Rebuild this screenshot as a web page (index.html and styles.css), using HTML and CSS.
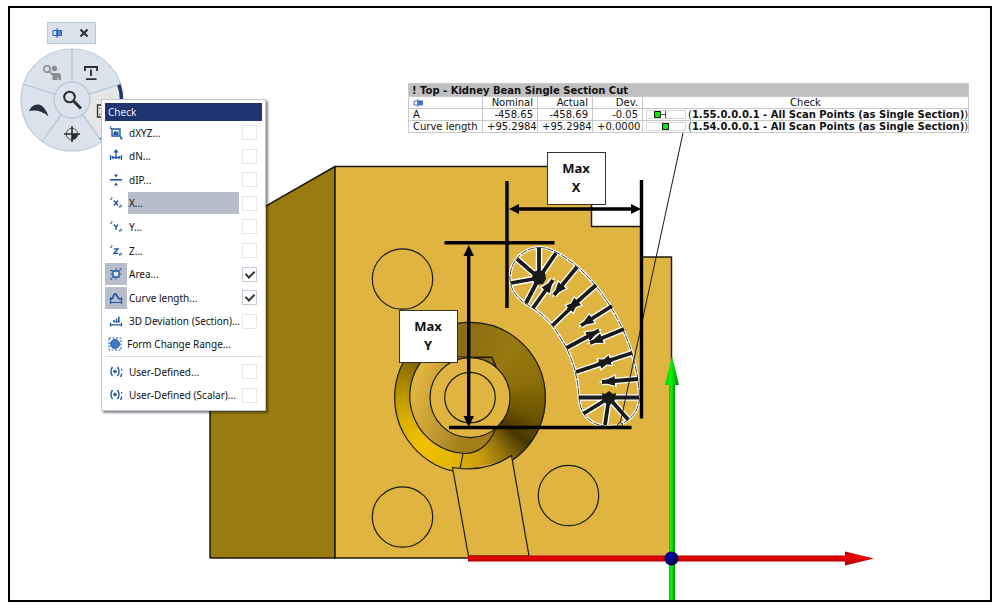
FILE: index.html
```html
<!DOCTYPE html>
<html lang="en">
<head>
<meta charset="utf-8">
<title>Check – Kidney Bean Single Section Cut</title>
<link rel="stylesheet" href="styles.css">
</head>
<body>
<main class="viewport">
  <svg class="scene" width="999" height="609" viewBox="0 0 999 609" aria-hidden="true">
    <defs>
      <linearGradient id="pocket" x1="0" y1="0" x2="1" y2="0.35">
        <stop offset="0.15" stop-color="#e0b440"/><stop offset="0.6" stop-color="#b8922c"/><stop offset="0.85" stop-color="#a37d18"/>
      </linearGradient>
      <linearGradient id="red" x1="0" y1="0" x2="0" y2="1">
        <stop offset="0" stop-color="#b00000"/><stop offset="0.4" stop-color="#f00404"/><stop offset="1" stop-color="#a80000"/>
      </linearGradient>
      <linearGradient id="green" x1="0" y1="0" x2="1" y2="0">
        <stop offset="0" stop-color="#00d000"/><stop offset="0.4" stop-color="#0cf20c"/><stop offset="1" stop-color="#008c00"/>
      </linearGradient>
      <radialGradient id="ball" cx="0.4" cy="0.35">
        <stop offset="0" stop-color="#0808b8"/><stop offset="1" stop-color="#000058"/>
      </radialGradient>
      <marker id="tip" markerUnits="userSpaceOnUse" markerWidth="20" markerHeight="20" refX="13" refY="8" orient="auto">
        <path d="M0 3 13 8 0 13Z" fill="#1a1a1a"/>
      </marker>
      <marker id="tipHalo" markerUnits="userSpaceOnUse" markerWidth="24" markerHeight="24" refX="15" refY="10" orient="auto">
        <path d="M2 5 15 10 2 15Z" fill="#fff" stroke="#fff" stroke-width="2.4"/>
      </marker>
      <g id="spokes">
        <path d="M539 278V248M539 278 556 253M539 278 517 259M539 278 511 283M539 278 526 303"/>
        <path d="M579 397.500H639M609 398 583.500 413.500M609 398 605 425M609 398 628 419.500"/>
      </g>
      <g id="vectors">
        <path d="M533 308 553 280"/><path d="M577 267 554 295"/>
        <path d="M596 285 568 310"/><path d="M552.500 325.500 579 300"/>
        <path d="M612 306 581 325.500"/><path d="M624 329 590 343"/>
        <path d="M566.500 348 599 330.500"/><path d="M632 353 598 364"/>
        <path d="M576 372 612 360"/><path d="M638 379 602 382"/>
      </g>
    </defs>

    <!-- solid body -->
    <g stroke="#1d1a0c" stroke-width="1.5" stroke-linejoin="round">
      <path d="M335 166.500 210 238V558H335Z" fill="#9a7b11"/>
      <path d="M335 166.500H591.500V226.500H641V257H671.500V558H335Z" fill="#e0b440"/>
    </g>
    <g fill="none" stroke="#1d1a0c" stroke-width="1.200">
      <circle cx="402.500" cy="279" r="30.200"/><circle cx="402.500" cy="517" r="30.200"/><circle cx="568.500" cy="495.500" r="30.200"/>
    </g>

    <!-- countersunk bore -->
    <foreignObject x="394" y="322" width="152" height="152"><div xmlns="http://www.w3.org/1999/xhtml" class="bore"></div></foreignObject>
    <g stroke="#1d1a0c" stroke-width="1.200">
      <circle cx="470" cy="397.600" r="75.300" fill="none"/>
      <path d="M425 357H492L496 367 470 397 495 430Q485 453 465 453.500A57.500 57.500 0 0 1 425 357Z" fill="url(#pocket)"/>
      <path d="M463 453.500 460 469" fill="none"/>
      <path d="M470 357.500H492L496 367Q485 358 470 357.500Z" fill="#8b6d0c"/>
      <circle cx="470" cy="397.600" r="40" fill="#e0b440"/><circle cx="470" cy="397.600" r="25.300" fill="none"/>
      <path d="M453 472 452 467.500Q486 473 512 455.500L513 459" fill="#e0b440" stroke="none"/>
      <path d="M468.500 556 452.500 467.500Q486 473 511.500 455.500L529 556Z" fill="#e0b440"/>
    </g>

    <!-- kidney bean section -->
    <g id="bean" fill="none">
      <g stroke="#fff" stroke-width="6.500"><use href="#spokes"/><use href="#vectors" class="halo"/></g>
      <path id="outline" stroke="#fff" stroke-width="3" d="M539 247.500C548 247 562 254 577 266.500C601 287 622 321 632 353C637 371 639 382 639.300 397.500C639.500 414 625 426.500 609 426.500C592 426.500 580 415 579 398C578 378 573 358 563 342C555 328 547 317 533 308C518 300 510 291 510 278C510 261 523 248 539 247.500Z"/>
      <path stroke="#2d2a20" stroke-width="0.900" stroke-dasharray="7 1" d="M539 247.500C548 247 562 254 577 266.500C601 287 622 321 632 353C637 371 639 382 639.300 397.500C639.500 414 625 426.500 609 426.500C592 426.500 580 415 579 398C578 378 573 358 563 342C555 328 547 317 533 308C518 300 510 291 510 278C510 261 523 248 539 247.500Z"/>
      <g stroke="#1a1a1a" stroke-width="3.800"><use href="#spokes"/><use href="#vectors" class="solid"/></g>
      <path fill="#1a1a1a" d="M533 272 539 270 545 272 546 279 543 284 536 285 532 279ZM602 393 605 394 609 391 613 394 616 393 615 400 609 406 603 401Z"/>
    </g>
    <path d="M683 133 620 424" stroke="#1a1a1a" fill="none"/>
    <circle cx="620" cy="425" r="2.500" fill="#e0b440" stroke="#222" stroke-width="0.800"/>

    <!-- dimension lines -->
    <g stroke="#000" stroke-width="3.400" fill="none">
      <path d="M507 181V308M641.500 180V418.500M444.500 242.700H554.500M449 427.500H631.500"/>
      <path d="M517 209H633M468.700 254V419"/>
    </g>
    <path d="M509 209 519 204V214ZM641 209 631 204V214ZM468.700 245 463.500 256H474ZM468.700 427 463.500 416H474Z"/>

    <!-- axes -->
    <path d="M669 384H675V601H669Z" fill="url(#green)"/><path d="M672 356 679 385H665Z" fill="url(#green)"/>
    <path d="M468 555.500H845V561.500H468Z" fill="url(#red)"/><path d="M874 558.500 845 565.500V551.500Z" fill="url(#red)"/>
    <circle cx="671.500" cy="558.500" r="7" fill="url(#ball)"/>
  </svg>

  <div class="dimension dimension-x">Max<br>X</div>
  <div class="dimension dimension-y">Max<br>Y</div>

  <table class="report">
    <colgroup><col class="c-name"><col class="c-num"><col class="c-num"><col class="c-dev"><col></colgroup>
    <thead>
      <tr class="title"><th colspan="5">! Top - Kidney Bean Single Section Cut</th></tr>
      <tr class="heads">
        <th><svg class="pin" width="11" height="8" viewBox="0 0 11 8"><path d="M1 2H5V6H1ZM5 0V8" fill="none" stroke="#3f78c0"/><path d="M5 1.500H10V6.500H5Z" fill="#3f78c0"/></svg></th>
        <th>Nominal</th><th>Actual</th><th>Dev.</th><th class="center">Check</th>
      </tr>
    </thead>
    <tbody>
      <tr><td>A</td><td>-458.65</td><td>-458.69</td><td>-0.05</td>
        <td><div class="verdict"><svg width="40" height="9" viewBox="0 0 40 9"><path d="M.5.5H39.500V8.500H.5Z" fill="#fff" stroke="#d4d4d4"/><path d="M15 4.500H19.500M19.500 1V8" stroke="#555"/><path d="M8.500 1.500H14.500V7.500H8.500Z" fill="#0e0" stroke="#111"/></svg><span>(<b>1.55.0.0.0.1 - All Scan Points (as Single Section)</b>)</span></div></td></tr>
      <tr><td>Curve length</td><td>+95.2984</td><td>+95.2984</td><td>+0.0000</td>
        <td><div class="verdict"><svg width="40" height="9" viewBox="0 0 40 9"><path d="M.5.5H39.500V8.500H.5Z" fill="#fff" stroke="#d4d4d4"/><path d="M16.500 1.500H22.500V7.500H16.500Z" fill="#0e0" stroke="#111"/></svg><span>(<b>1.54.0.0.0.1 - All Scan Points (as Single Section)</b>)</span></div></td></tr>
    </tbody>
  </table>

  <div class="pinbar">
    <button type="button" aria-label="Pin"><svg width="11" height="10" viewBox="0 0 11 10"><path d="M1 2.500H5V7.500H1ZM5 0V10" fill="none" stroke="#1d5cb3"/><path d="M5.500 2.500H9.500V7.500H5.500Z" fill="#5b92dc" stroke="#1d5cb3"/></svg></button>
    <button type="button" aria-label="Close"><svg width="10" height="10" viewBox="0 0 10 10"><path d="M1.500 1.500 8.500 8.500M8.500 1.500 1.500 8.500" stroke="#2b2b2b" stroke-width="2"/></svg></button>
  </div>

  <nav class="wheel" aria-label="Tools">
    <svg class="wheel-face" width="104" height="104" viewBox="0 0 104 104">
      <circle cx="52" cy="52" r="51" fill="#dce2ec"/>
      <path d="M52 52 100.500 36.200A51 51 0 0 1 82 93.300Z" fill="#e6e6e6"/>
      <path d="M52 52V1M52 52 100.500 36.200M52 52 82 93.300M52 52 22 93.300M52 52 3.500 36.200" stroke="#bcc8d9" stroke-width="1.400"/>
      <circle cx="52" cy="52" r="51" fill="none" stroke="#bcc8d9" stroke-width="1.200"/>
      <path d="M99 36.700A49.500 49.500 0 0 1 81 92" fill="none" stroke="#1e3570" stroke-width="3.500"/>
      <circle cx="52" cy="52" r="18" fill="#dce2ec" stroke="#bcc8d9" stroke-width="1.400"/>
    </svg>
    <button type="button" class="tool t-inspect" aria-label="Inspect"><svg width="20" height="20" viewBox="0 0 20 20" fill="none" stroke="#2d2d2d"><circle cx="7.500" cy="7" r="5.300" stroke-width="2"/><path d="M11.500 11 19 18.500" stroke-width="3"/></svg></button>
    <button type="button" class="tool t-user" aria-label="Find object"><svg width="20" height="20" viewBox="0 0 20 20"><circle cx="5" cy="6" r="3.200" fill="none" stroke="#969696" stroke-width="1.800"/><path d="M7.500 8.500 11.500 12.500" stroke="#969696" stroke-width="2.200"/><circle cx="12.500" cy="5.500" r="2.700" fill="#8c8c8c"/><path d="M10 10H16Q19 10 19 13V17H16.500V14H15.500V17H10.500V13Z" fill="#8c8c8c"/></svg></button>
    <button type="button" class="tool t-text" aria-label="Dimension"><svg width="20" height="20" viewBox="0 0 20 20" fill="none" stroke="#2d2d2d" stroke-width="1.800"><path d="M3.900 8V4H16.100V8M10 6.500V13M5 16.200H15.500"/><path d="M3 4H17" stroke-width="2"/></svg></button>
    <button type="button" class="tool t-check" aria-label="Check"><svg width="20" height="20" viewBox="0 0 20 20" fill="none" stroke="#333"><path d="M10 4H6.500V16H10" stroke-width="1.300"/><path d="M8.500 7V8M8.500 13V14"/></svg></button>
    <button type="button" class="tool t-align" aria-label="Align"><svg width="20" height="20" viewBox="0 0 20 20"><path d="M10 10H16A6 6 0 0 1 10 16Z" fill="#2b2b2b"/><circle cx="10" cy="10" r="5.700" fill="none" stroke="#555"/><path d="M10 2V18M2 10H18" stroke="#2b2b2b" stroke-width="1.600"/></svg></button>
    <button type="button" class="tool t-surface" aria-label="Surface"><svg width="20" height="20" viewBox="0 0 20 20"><path d="M0 11Q3 3.500 10 4.500 16 6 19.500 16.500 11 9 0 11Z" fill="#29303c"/></svg></button>
  </nav>

  <section class="menu" aria-label="Check">
    <h1>Check</h1>
    <div class="rows rows-main">
      <div class="row"><span class="ic"><svg width="14" height="14" viewBox="0 0 14 14"><path d="M3 3H11V10H3Z" fill="none" stroke="#1c56a8" stroke-width="1.400"/><path d="M4.500 9V6L6.500 5 8 6.500 9.500 4V9ZM1 0 3 1 1 2ZM11 11 14 12 12 14Z" fill="#1c56a8"/><path d="M1 2.500H3M12 10V13" stroke="#1c56a8"/></svg></span><label for="k1">dXYZ...</label><input type="checkbox" id="k1"></div>
      <div class="row"><span class="ic"><svg width="14" height="14" viewBox="0 0 14 14"><path d="M7 2V10M3 8.500H11M1.500 6V11M12.500 6V11" fill="none" stroke="#1c56a8" stroke-width="1.300"/><path d="M7 0 9.500 3.500H4.500ZM2 8.500 4.500 6.500V10.500ZM12 8.500 9.500 6.500V10.500Z" fill="#1c56a8"/></svg></span><label for="k2">dN...</label><input type="checkbox" id="k2"></div>
      <div class="row"><span class="ic"><svg width="14" height="14" viewBox="0 0 14 14"><path d="M1 6.800H13" stroke="#1c56a8" stroke-width="1.600"/><path d="M5 1.500H9L7 4.500ZM5 12.500H9L7 9.500Z" fill="#1c56a8"/></svg></span><label for="k3">dIP...</label><input type="checkbox" id="k3"></div>
      <div class="row hover"><span class="ic"><svg width="14" height="14" viewBox="0 0 14 14"><path d="M5 4.500 9 9.500M9 4.500 5 9.500" stroke="#1c56a8" stroke-width="1.300"/><path d="M2 1 4 2 2.500 3ZM1 3H2.500V4H1ZM10 10H11.500V11.500H10ZM11.500 8.500 13 9 12 12Z" fill="#1c56a8"/></svg></span><label for="k4">X...</label><input type="checkbox" id="k4"></div>
      <div class="row"><span class="ic"><svg width="14" height="14" viewBox="0 0 14 14"><path d="M5 4.500 7 7 9 4.500M7 7V10" fill="none" stroke="#1c56a8" stroke-width="1.300"/><path d="M2 1 4 2 2.500 3ZM1 3H2.500V4H1ZM10 10H11.500V11.500H10ZM11.500 8.500 13 9 12 12Z" fill="#1c56a8"/></svg></span><label for="k5">Y...</label><input type="checkbox" id="k5"></div>
      <div class="row"><span class="ic"><svg width="14" height="14" viewBox="0 0 14 14"><path d="M5 4.800H9L5 9.300H9.500" fill="none" stroke="#1c56a8" stroke-width="1.300"/><path d="M2 1 4 2 2.500 3ZM1 3H2.500V4H1ZM10 10H11.500V11.500H10ZM11.500 8.500 13 9 12 12Z" fill="#1c56a8"/></svg></span><label for="k6">Z...</label><input type="checkbox" id="k6"></div>
      <div class="row active"><span class="ic"><svg width="14" height="14" viewBox="0 0 14 14"><path d="M4 4H10V10H4Z" fill="#dfe9f7" stroke="#1c56a8" stroke-width="1.400"/><path d="M7 1.500V3.500M7 10.500V12.500M1.500 7H3.500M10.500 7H12.500" stroke="#1c56a8"/><path d="M10 2 12.500 1 12 3.500ZM1.500 10.500 4 12 1.500 13ZM1 3H3V4H1Z" fill="#1c56a8"/></svg></span><label for="k7">Area...</label><input type="checkbox" id="k7" checked></div>
      <div class="row active"><span class="ic"><svg width="14" height="14" viewBox="0 0 14 14"><path d="M1.500 6V13M12.500 6V13M1.500 11.500H12.500" fill="none" stroke="#1c56a8" stroke-width="1.200"/><path d="M1.500 8Q3.500 8.500 4.500 5 5.500 1.500 7.500 4L10 8H12.500" fill="none" stroke="#1c56a8" stroke-width="1.700"/></svg></span><label for="k8">Curve length...</label><input type="checkbox" id="k8" checked></div>
      <div class="row"><span class="ic"><svg width="14" height="14" viewBox="0 0 14 14"><path d="M1 10.800H13M1.500 9V12.500M12.500 9V12.500M4.500 8H11" stroke="#1c56a8" stroke-width="1.200"/><path d="M5 8V6M7.500 8V4.500M9.800 8V2.500" stroke="#1c56a8" stroke-width="1.500"/></svg></span><label for="k9">3D Deviation (Section)...</label><input type="checkbox" id="k9"></div>
    </div>
    <button type="button" class="row plain"><span class="ic"><svg width="14" height="14" viewBox="0 0 14 14"><path d="M1 1H13V13H1Z" fill="none" stroke="#1c56a8" stroke-dasharray="2 1.500"/><circle cx="7" cy="7" r="4.500" fill="#4179c6" stroke="#2560b4"/></svg></span><span>Form Change Range...</span></button>
    <hr>
    <div class="rows rows-user">
      <div class="row"><span class="ic"><svg width="14" height="14" viewBox="0 0 14 14"><path d="M3.500 2Q.5 6.500 3.500 11M8.500 2Q11.500 6.500 8.500 11M12.500 8.500V10L11.500 12" fill="none" stroke="#1c56a8" stroke-width="1.400"/><path d="M6 4.500V8.500M4 6.500H8" stroke="#1c56a8" stroke-width="1.400"/><path d="M12 4H13.300V5.500H12Z" fill="#1c56a8"/></svg></span><label for="k10">User-Defined...</label><input type="checkbox" id="k10"></div>
      <div class="row"><span class="ic"><svg width="14" height="14" viewBox="0 0 14 14"><path d="M3.500 2Q.5 6.500 3.500 11M8.500 2Q11.500 6.500 8.500 11M12.500 8.500V10L11.500 12" fill="none" stroke="#1c56a8" stroke-width="1.400"/><path d="M6 4.500V8.500M4 6.500H8" stroke="#1c56a8" stroke-width="1.400"/><path d="M12 4H13.300V5.500H12Z" fill="#1c56a8"/></svg></span><label for="k11">User-Defined (Scalar)...</label><input type="checkbox" id="k11"></div>
    </div>
  </section>
</main>
</body>
</html>
```
FILE: styles.css
```css
* { box-sizing: border-box; }
body { margin: 0; background: #fff; color: #111; font: 10px/16px "Noto Sans", "Open Sans", sans-serif; }
button { font: inherit; color: inherit; background: none; border: 0; padding: 0; }
svg { display: block; }

.viewport { position: relative; min-height: 100vh; overflow: hidden; }
.viewport::after { content: ""; position: absolute; inset: 6px 7px 7px 8px; border: 2px solid #000; pointer-events: none; }
.scene { position: absolute; top: 0; left: 0; }
.bore {
  width: 152px; height: 152px; border-radius: 50%;
  background: conic-gradient(#8b6e10 0deg, #977911 40deg, #8b6e08 75deg, #6e5500 105deg, #483600 128deg, #94740c 150deg, #c79c0e 170deg, #e5b608 195deg, #f2c000 225deg, #dcb000 250deg, #b08c00 280deg, #705800 310deg, #8b6e10 340deg);
}
#vectors path { fill: none; }
.halo { marker-end: url(#tipHalo); }
.solid { marker-end: url(#tip); }

.dimension {
  position: absolute; width: 59px; padding: 6px 1px 7px 0; background: #fff; border: 1px solid #333;
  font: bold 13px/19px "Noto Sans", sans-serif; text-align: center; color: #111;
}
.dimension-x { left: 547px; top: 152px; }
.dimension-y { left: 399px; top: 310px; }

.report {
  position: absolute; left: 408px; top: 83px; width: 561px; table-layout: fixed;
  border-collapse: collapse; border: 1px solid #666; background: #fff; color: #111;
  font: 10px/11px "DejaVu Sans", sans-serif;
}
.c-name { width: 74px; }
.c-num { width: 55px; }
.c-dev { width: 50px; }
.report th, .report td { height: 12px; padding: 0 4px; border: 1px solid #c8c8c8; font-weight: normal; text-align: right; white-space: nowrap; }
.report td:first-child, .report th:first-child, .report td:last-child { text-align: left; }
.report td:last-child { padding: 0 3px; }
.report .title th { height: 13px; background: #c0c0c0; font-weight: bold; padding-left: 3px; }
.report .center { text-align: center; }
.verdict { display: flex; align-items: center; gap: 2px; }
.verdict svg { flex: none; }

.pinbar {
  position: absolute; left: 47px; top: 22px; width: 49px; height: 22px; padding: 0 6px 0 4px;
  display: flex; justify-content: space-between; align-items: center;
  background: #dce2ec; border: 1px solid #bcc8d9;
}

.wheel { position: absolute; left: 20px; top: 48px; width: 104px; height: 104px; }
.tool { position: absolute; width: 20px; height: 20px; }
.t-inspect { left: 42px; top: 42px; }
.t-user { left: 22px; top: 15px; }
.t-text { left: 61px; top: 15px; }
.t-check { left: 71px; top: 53px; }
.t-align { left: 42px; top: 76px; }
.t-surface { left: 9px; top: 52px; }

.menu {
  position: absolute; left: 101px; top: 99px; width: 165px; padding: 3px;
  background: #fff; border: 1px solid #bcc8d9; box-shadow: 2px 2px 2px rgba(0, 0, 0, .45);
}
.menu h1 { margin: 0; height: 18px; padding-left: 3px; background: #1e3570; color: #e8ecf4; font: 10px/18px "Noto Sans", sans-serif; }
.rows { display: grid; grid-auto-rows: 1fr; }
.rows-main { height: 212px; }
.rows-user { height: 47px; }
.row { display: grid; grid-template-columns: 22px minmax(0, 1fr) 15px; column-gap: 1px; align-items: center; padding-right: 5px; }
.row label { height: 22px; margin-right: 2px; line-height: 22px; padding-left: 1px; white-space: nowrap; }
.ic { height: 22px; display: grid; place-items: center; }
.hover label { background: #b8bec9; }
.active .ic { background: #b8bec9; }
.plain { width: 100%; height: 20px; text-align: left; white-space: nowrap; column-gap: 0; }
.plain .ic { width: 20px; }
.menu hr { margin: 3px 0; height: 1px; border: 0; background: #d5dbe6; }

input[type="checkbox"] { appearance: none; margin: 0; width: 15px; height: 15px; border: 1px solid #e6e7ea; background: #fff; display: grid; place-items: center; }
input[type="checkbox"]:checked { border-color: #c3cddc; }
input[type="checkbox"]:checked::after { content: ""; width: 4px; height: 7px; border: solid #333; border-width: 0 2px 2px 0; transform: rotate(45deg); margin-bottom: 2px; }
```
